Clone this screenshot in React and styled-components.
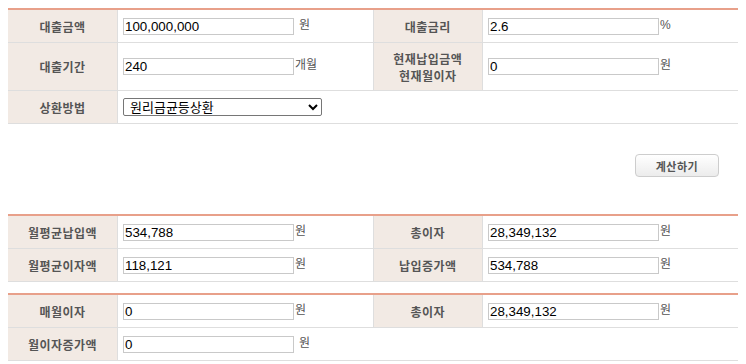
import React from 'react';
import styled, { createGlobalStyle } from 'styled-components';

const GlobalStyle = createGlobalStyle`
    body {
        margin: 8px;
        background: #fff;
        font-family: 'Noto Sans CJK KR', 'Noto Sans', sans-serif;
    }
`

const Table = styled.table`
    width: 100%;
    border-collapse: collapse;
    table-layout: fixed;
    border-top: 2px solid #e8a08a;
    margin-top: ${p => p.$gap || 0}px;
`

const Th = styled.th`
    height: ${p => p.$tall ? 47 : 32}px;
    padding: 0;
    background: #f2eae4;
    color: #555;
    font-size: 12px;
    font-weight: bold;
    letter-spacing: 0.5px;
    line-height: 17px;
    text-align: center;
    border-bottom: 1px solid #dedede;
    border-right: 1px solid #dedede;
    border-left: ${p => p.$mid ? '1px solid #dedede' : 'none'};
`

const Td = styled.td`
    height: ${p => p.$tall ? 47 : 32}px;
    padding: 0 0 0 5px;
    border-bottom: 1px solid #dedede;
`

const Cell = styled.div`
    display: flex;
    align-items: center;
    white-space: nowrap;
`

const Input = styled.input`
    box-sizing: border-box;
    width: 171px;
    height: 17px;
    padding: 0 1px;
    margin: 0;
    border: 1px solid #c9c9c9;
    font-family: 'Liberation Sans', Arial, sans-serif;
    font-size: 13.33px;
    color: #000;
    outline: none;
`

const Unit = styled.span`
    margin-left: ${p => p.$spaced ? 5 : 1}px;
    margin-bottom: 3px;
    font-family: 'Liberation Sans', 'Noto Sans CJK KR', sans-serif;
    font-size: 12px;
    line-height: 14px;
    color: #555;
`

const Select = styled.select`
    box-sizing: border-box;
    width: 199px;
    height: 18px;
    padding: 0 0 0 2px;
    border: 1px solid #767676;
    border-radius: 2px;
    font-family: 'Liberation Sans', 'Noto Sans CJK KR', sans-serif;
    font-size: 13px;
    color: #000;
    background: #fff;
`

const ButtonRow = styled.div`
    display: flex;
    justify-content: flex-end;
    padding: 30px 19px 0 0;
`

const Button = styled.button`
    width: 84px;
    height: 23px;
    padding: 0;
    border: 1px solid #cdcdcd;
    border-radius: 4px;
    background: linear-gradient(#ffffff, #ececec);
    color: #555;
    font-family: 'Noto Sans CJK KR', sans-serif;
    font-size: 11px;
    font-weight: bold;
    letter-spacing: 0.5px;
    cursor: pointer;
`

const Cols = () => (
    <colgroup>
        <col style={{ width: '15%' }} />
        <col style={{ width: '35%' }} />
        <col style={{ width: '15%' }} />
        <col style={{ width: '35%' }} />
    </colgroup>
)

const Field = ({ value, unit, spaced }) => (
    <Td>
        <Cell>
            <Input defaultValue={value} />
            {unit && <Unit $spaced={spaced}>{unit}</Unit>}
        </Cell>
    </Td>
)

const App = () => {
    return (
        <>
            <GlobalStyle />
            <Table>
                <Cols />
                <tbody>
                    <tr>
                        <Th>대출금액</Th>
                        <Field value="100,000,000" unit="원" spaced />
                        <Th $mid>대출금리</Th>
                        <Field value="2.6" unit="%" />
                    </tr>
                    <tr>
                        <Th $tall>대출기간</Th>
                        <Field value="240" unit="개월" />
                        <Th $mid $tall>현재납입금액<br />현재월이자</Th>
                        <Field value="0" unit="원" />
                    </tr>
                    <tr>
                        <Th>상환방법</Th>
                        <Td colSpan={3}>
                            <Cell>
                                <Select defaultValue="1">
                                    <option value="1">원리금균등상환</option>
                                    <option value="2">원금균등상환</option>
                                    <option value="3">만기일시상환</option>
                                </Select>
                            </Cell>
                        </Td>
                    </tr>
                </tbody>
            </Table>

            <ButtonRow>
                <Button type="button">계산하기</Button>
            </ButtonRow>

            <Table $gap={37}>
                <Cols />
                <tbody>
                    <tr>
                        <Th>월평균납입액</Th>
                        <Field value="534,788" unit="원" />
                        <Th $mid>총이자</Th>
                        <Field value="28,349,132" unit="원" />
                    </tr>
                    <tr>
                        <Th>월평균이자액</Th>
                        <Field value="118,121" unit="원" />
                        <Th $mid>납입증가액</Th>
                        <Field value="534,788" unit="원" />
                    </tr>
                </tbody>
            </Table>

            <Table $gap={11}>
                <Cols />
                <tbody>
                    <tr>
                        <Th>매월이자</Th>
                        <Field value="0" unit="원" />
                        <Th $mid>총이자</Th>
                        <Field value="28,349,132" unit="원" />
                    </tr>
                    <tr>
                        <Th>월이자증가액</Th>
                        <Field value="0" unit="원" spaced />
                        <Td colSpan={2} />
                    </tr>
                </tbody>
            </Table>
        </>
    )
}

export default App;
